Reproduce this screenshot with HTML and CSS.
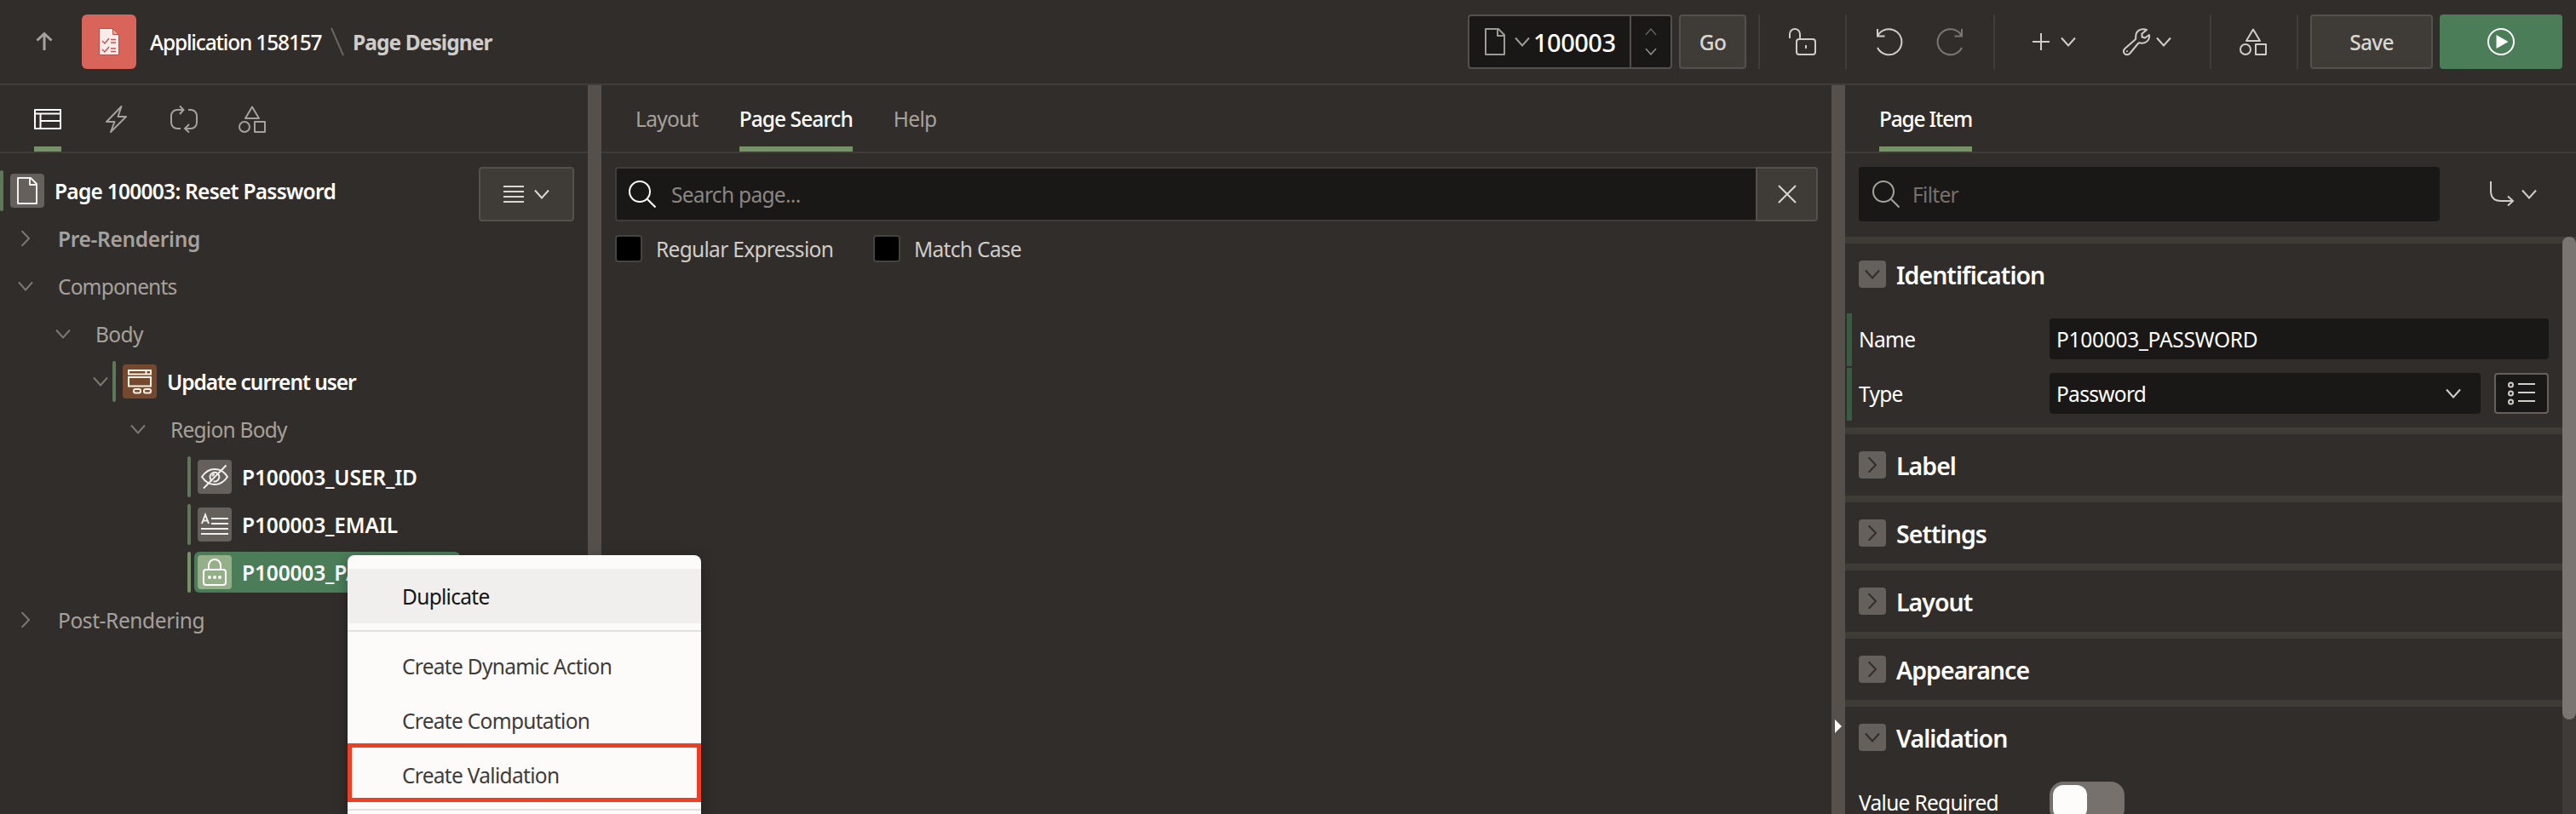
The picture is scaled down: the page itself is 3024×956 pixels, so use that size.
FILE: index.html
```html
<!DOCTYPE html>
<html lang="en">
<head>
<meta charset="utf-8">
<title>Page Designer</title>
<link rel="stylesheet" href="styles.css">
</head>
<body>
<svg class="defs" width="0" height="0" aria-hidden="true">
  <symbol id="chev-down" viewBox="0 0 18 12"><path d="M1 1.500 9 10.500 17 1.500"/></symbol>
  <symbol id="chev-right" viewBox="0 0 12 18"><path d="M1.500 0 10 9 1.500 18"/></symbol>
  <symbol id="page" viewBox="0 0 32 32"><path stroke-linejoin="round" d="M5 1H20L27 8V31H5ZM19 1V9H27"/></symbol>
  <symbol id="shapes" viewBox="0 0 32 32"><path stroke-linejoin="round" d="M16 1.500 24 15H8ZM19 19H31V31H19Z"/><circle cx="7" cy="25" r="6"/></symbol>
  <symbol id="search" viewBox="0 0 32 32"><circle cx="13" cy="13" r="12"/><path d="M22 22 31.500 31.500"/></symbol>
</svg>
<header class="topbar">
  <svg class="icon up" viewBox="0 0 20 22"><path d="M10 21V2M1.500 9.500 10 1.500 18.500 9.500"/></svg>
  <div class="app-icon">
    <svg viewBox="0 0 24 32"><path class="paper" d="M.5.500H16.500L23.500 7.500V31.500H.5Z"/><path class="fold" d="M16.500.500V7.500H23.500Z"/><path class="tick" d="M4 15 7 18 12 12M14 13.500H20M14 17H20M4 25 7 28 12 22M14 24H20M14 27.500H20"/></svg>
  </div>
  <span class="crumb t-crumb">Application 158157</span>
  <svg class="slash" viewBox="0 0 16 32"><path d="M1 0 15 32"/></svg>
  <span class="crumb current">Page Designer</span>
  <div class="tools">
    <div class="page-select">
      <svg class="icon i32" ><use href="#page"/></svg>
      <svg class="icon cd"><use href="#chev-down"/></svg>
      <span class="page-no">100003</span>
      <div class="spin"><svg class="icon sm flip dim"><use href="#chev-down"/></svg><svg class="icon sm"><use href="#chev-down"/></svg></div>
    </div>
    <button class="btn go">Go</button>
    <div class="tool t-lock"><svg class="icon i32" viewBox="0 0 32 32"><path d="M1 12V7A6 6 0 0 1 13 7V13"/><rect x="9" y="13" width="22" height="18" rx="3"/><path d="M20 20V24"/></svg></div>
    <div class="tool t-undo">
      <svg class="icon i32" viewBox="0 0 32 32"><path d="M2 1V9.500H10.500M2 9.500A15 15 0 1 1 2 23"/></svg>
      <svg class="icon i32 muted" viewBox="0 0 32 32"><path d="M30 1V9.500H21.500M30 9.500A15 15 0 1 0 30 23"/></svg>
    </div>
    <div class="tool t-add">
      <svg class="icon plus" viewBox="0 0 20 20"><path d="M10 0V20M0 10H20"/></svg><svg class="icon cd"><use href="#chev-down"/></svg>
      <svg class="icon i32 wrench" viewBox="0 0 32 32"><path stroke-linejoin="round" d="M2.500 24 14.500 13.500Q15.500 12.500 15.200 10C15 3.500 21 -.5 28 2L22.500 6.500 22.500 10.500 26 11.500 31 8C32 14 27 18.500 21 17.500Q19 17 18 18L8.500 29.500C6.500 32 3.500 31.500 2 30C.5 28 .5 26 2.500 24ZM5 26.500V28"/></svg><svg class="icon cd"><use href="#chev-down"/></svg>
    </div>
    <div class="tool t-shapes"><svg class="icon i32"><use href="#shapes"/></svg></div>
    <div class="tool t-save"><button class="btn save">Save</button>
    <button class="btn run"><svg class="i32" viewBox="0 0 32 32"><circle cx="16" cy="16" r="15" fill="none" stroke="#fff" stroke-width="2"/><path d="M10.500 8 24.500 16 10.500 24Z" fill="#fff"/></svg></button></div>
  </div>
</header>
<main class="workspace">
  <section class="left">
    <div class="strip icons">
      <div class="tab on"><svg class="icon i32 white" viewBox="0 0 32 32"><path stroke-linejoin="round" d="M1 5H31V27H1ZM1 9.500H31M7.500 9.500V27M7.500 18H31"/></svg></div>
      <div class="tab"><svg class="icon i32" viewBox="0 0 32 32"><path stroke-linejoin="round" d="M22.500 1 5 19H14.500L10 31 28 13H18.500Z"/></svg></div>
      <div class="tab"><svg class="icon i32" viewBox="0 0 32 32"><path d="M15 5H8A7 7 0 0 0 1 12V20A7 7 0 0 0 8 27H12M11 .500 15.500 5 11 10M21 5H24A7 7 0 0 1 31 12V20A7 7 0 0 1 24 27H17M22 22 17 27 22 31.500"/></svg></div>
      <div class="tab"><svg class="icon i32"><use href="#shapes"/></svg></div>
    </div>
    <div class="tree-area">
      <ul class="tree">
        <li class="lv-root"><i class="bar"></i><span class="box"><svg class="icon i32 light"><use href="#page"/></svg></span><b class="t-page">Page 100003: Reset Password</b></li>
        <li class="lv0"><span class="tw"><svg class="icon cr"><use href="#chev-right"/></svg></span><b class="t-pre">Pre-Rendering</b></li>
        <li class="lv0"><span class="tw"><svg class="icon cd"><use href="#chev-down"/></svg></span><span class="t-comp">Components</span></li>
        <li class="lv1"><span class="tw"><svg class="icon cd"><use href="#chev-down"/></svg></span><span class="t-body">Body</span></li>
        <li class="lv2"><span class="tw"><svg class="icon cd"><use href="#chev-down"/></svg></span><i class="bar"></i><span class="box form"><svg class="i32" viewBox="0 0 32 32" fill="none" stroke="#fff3e4" stroke-width="2"><path d="M3 3H29V7.500H3ZM23.500 3V7.500M3 11H29V21.500H3Z"/><rect x="9" y="25" width="8" height="4.500" rx="2"/><rect x="21" y="25" width="8" height="4.500" rx="2"/></svg></span><b class="t-upd">Update current user</b></li>
        <li class="lv3"><span class="tw"><svg class="icon cd"><use href="#chev-down"/></svg></span><span class="t-reg">Region Body</span></li>
        <li class="lv4"><i class="bar"></i><span class="node"><span class="box"><svg class="icon i32 light" viewBox="0 0 32 32"><path d="M1 16C9 4 23 4 31 16C23 28 9 28 1 16ZM3 29.500 29.500 2.500"/><path d="M13 20.800A5.500 5.500 0 1 1 20.500 13M18.500 12 21 14A5.500 5.500 0 0 1 14.500 21.300M13.500 15.500A2.500 2.500 0 0 1 16 13"/></svg></span><b class="t-uid">P100003_USER_ID</b></span></li>
        <li class="lv4"><i class="bar"></i><span class="node"><span class="box"><svg class="icon i32 light" viewBox="0 0 32 32"><path d="M1 15 5 4.500 9 15M2.500 11.500H7.500M12 9H32M12 15H32M0 21H32M0 27H32"/></svg></span><b class="t-email">P100003_EMAIL</b></span></li>
        <li class="lv4"><i class="bar"></i><span class="node sel"><span class="box"><svg class="icon i32 light" viewBox="0 0 32 32"><path d="M9 13V8A7 7 0 0 1 23 8V13"/><rect x="3" y="13" width="26" height="18" rx="3"/><g fill="#fff" stroke="none"><circle cx="10" cy="22" r="2"/><circle cx="16" cy="22" r="2"/><circle cx="22" cy="22" r="2"/></g></svg></span><b class="t-pw">P100003_PASSWORD</b></span></li>
        <li class="lv0"><span class="tw"><svg class="icon cr"><use href="#chev-right"/></svg></span><span class="t-post">Post-Rendering</span></li>
      </ul>
      <button class="btn tree-menu"><svg class="icon" width="24" height="22" viewBox="0 0 24 22"><path d="M0 2H24M0 8H24M0 14H24M0 20H24"/></svg><svg class="icon cd"><use href="#chev-down"/></svg></button>
    </div>
  </section>
  <div class="split"></div>
  <section class="center">
    <div class="strip words"><div class="tab t-layout">Layout</div><div class="tab on t-search">Page Search</div><div class="tab t-help">Help</div></div>
    <div class="search-row">
      <div class="search"><svg class="icon i32 white"><use href="#search"/></svg><span class="t-ph">Search page...</span></div>
      <button class="btn clear"><svg class="icon" width="20" height="20" viewBox="0 0 20 20"><path d="M0 0 20 20M20 0 0 20"/></svg></button>
    </div>
    <div class="checks"><i class="check"></i><span class="t-regex">Regular Expression</span><i class="check"></i><span class="t-case">Match Case</span></div>
  </section>
  <div class="split right-split"><svg width="8" height="16" viewBox="0 0 8 16"><path d="M0 0 8 8 0 16Z" fill="#fbf9f8"/></svg></div>
  <section class="right">
    <div class="strip words"><div class="tab on t-item">Page Item</div></div>
    <div class="filter-row">
      <div class="filter"><svg class="icon i32"><use href="#search"/></svg><span class="t-filter">Filter</span></div>
      <div class="goto"><svg class="icon" width="30" height="30" viewBox="0 0 30 30"><path d="M2 0V11Q2 23 14 23H28M22 17.500 28 23 22 28.500"/></svg><svg class="icon cd"><use href="#chev-down"/></svg></div>
    </div>
    <div class="props">
      <div class="groups">
        <div class="group"><h2><i class="tog"><svg class="cd"><use href="#chev-down"/></svg></i><span class="g-id">Identification</span></h2>
          <div class="prop changed"><label class="t-name">Name</label><div class="field t-val"><span>P100003_PASSWORD</span></div></div>
          <div class="prop changed"><label class="t-type">Type</label><div class="field select"><span class="t-pass">Password</span><svg class="icon cd"><use href="#chev-down"/></svg></div><button class="pick"><svg class="icon i32" viewBox="0 0 32 32"><circle cx="3.500" cy="6" r="2.500"/><circle cx="3.500" cy="16" r="2.500"/><circle cx="3.500" cy="26" r="2.500"/><path d="M12 5H32M12 15H32M12 25H32"/></svg></button></div>
        </div>
        <div class="group"><h2><i class="tog"><svg class="cr"><use href="#chev-right"/></svg></i><span class="g-label">Label</span></h2></div>
        <div class="group"><h2><i class="tog"><svg class="cr"><use href="#chev-right"/></svg></i><span class="g-set">Settings</span></h2></div>
        <div class="group"><h2><i class="tog"><svg class="cr"><use href="#chev-right"/></svg></i><span class="g-lay">Layout</span></h2></div>
        <div class="group"><h2><i class="tog"><svg class="cr"><use href="#chev-right"/></svg></i><span class="g-app">Appearance</span></h2></div>
        <div class="group"><h2><i class="tog"><svg class="cd"><use href="#chev-down"/></svg></i><span class="g-val">Validation</span></h2>
          <div class="prop req"><label class="t-req">Value Required</label><div class="switch"><i></i></div></div>
        </div>
      </div>
      <div class="scroll"><i></i></div>
    </div>
  </section>
</main>
<nav class="menu">
  <div class="item hover"><span class="m-dup">Duplicate</span></div>
  <hr>
  <div class="item"><span class="m-dyn">Create Dynamic Action</span></div>
  <div class="item"><span class="m-comp">Create Computation</span></div>
  <div class="item marked"><span class="m-val">Create Validation</span></div>
  <hr>
</nav>
</body>
</html>
```
FILE: styles.css
```css
* { box-sizing: border-box; }
body { margin: 0; width: 3024px; height: 956px; overflow: hidden; position: relative; display: flex; flex-direction: column; background: #312d2a; color: #fff; font: 24.5px/32px "Noto Sans", "Open Sans", sans-serif; letter-spacing: -.7px; }
.defs { position: absolute; }
svg { display: block; flex: none; overflow: visible; }
span, b, label { white-space: nowrap; padding-top: 2px; }
b { font-weight: 600; }
i { flex: none; }
.icon { fill: none; stroke: #a5a19c; stroke-width: 2; }
.i32 { width: 32px; height: 32px; }
.cd { width: 18px; height: 12px; }
.cr { width: 12px; height: 18px; }
.white { stroke: #fff; }
.light { stroke: #f1efed; }
button { font: inherit; color: inherit; letter-spacing: inherit; padding: 0; margin: 0; }
.btn { display: flex; align-items: center; justify-content: center; height: 64px; background: #3f3b37; border: 2px solid #55504b; border-radius: 4px; color: #d9d6d3; font-weight: 500; flex: none; }

.topbar { flex: none; height: 100px; border-bottom: 2px solid #413c38; display: flex; align-items: center; padding: 0 16px 0 42px; }
.up { width: 20px; height: 22px; margin-right: 34px; stroke-width: 3; }
.app-icon { width: 64px; height: 64px; border-radius: 6px; background: #d9645a; display: grid; place-items: center; margin-right: 16px; }
.app-icon svg { width: 24px; height: 32px; }
.paper { fill: #f9ecea; stroke: #b0524a; }
.fold { fill: #e6a39d; stroke: #b0524a; }
.tick { fill: none; stroke: #c4564d; stroke-width: 1.500; }
.crumb { width: 212px; letter-spacing: -1.17px; font-weight: 500; }
.slash { width: 16px; height: 32px; fill: none; stroke: #6b6661; stroke-width: 2; margin-right: 10px; }
.crumb.current { width: auto; color: #cfccc9; font-weight: 700; letter-spacing: -.93px; }
.tools { margin-left: auto; display: flex; align-items: center; height: 64px; }
.tools .icon { stroke: #d0cdc9; }
.page-select { width: 240px; height: 64px; background: #1a1816; border: 2px solid #55504b; border-radius: 4px; display: flex; align-items: center; margin-right: 8px; }
.page-select .icon { stroke: #9d9994; }
.page-select .i32 { margin-left: 14px; }
.page-select > .cd { margin: 0 4px 0 7px; }
.page-no { font-size: 29px; font-weight: 500; letter-spacing: -.5px; }
.spin { margin-left: auto; width: 48px; height: 100%; border-left: 2px solid #55504b; display: flex; flex-direction: column; align-items: center; justify-content: space-between; padding: 14px 0; }
.sm { width: 14px; height: 9px; }
.flip { transform: rotate(180deg); }
.page-select .dim { stroke: #6b6661; }
.go { width: 79px; }
.go, .save { padding-top: 2px; }
.tool { height: 64px; display: flex; align-items: center; border-left: 2px solid #413c38; }
.t-lock { margin-left: 14px; width: 102px; padding-left: 34px; }
.t-undo { width: 174px; padding-left: 34px; gap: 39px; }
.tools .muted { stroke: #7c7772; }
.t-add { width: 254px; padding-left: 44px; }
.plus { width: 20px; height: 20px; }
.t-add .cd { margin-left: 13px; }
.t-add .wrench { margin-left: 55px; }
.t-add .wrench + .cd { margin-left: 7px; }
.t-shapes { width: 102px; padding-left: 33px; }
.t-save { padding-left: 14px; gap: 8px; }
.save, .run { width: 144px; }
.run { background: #4a7d58; border-color: #4a7d58; }

.workspace { flex: 1; min-height: 0; display: grid; grid-template-columns: 690px 16px 1444px 16px 858px; }
.split { background: #55504b; }
.right-split { padding: 745px 0 0 4px; }
.strip { height: 80px; border-bottom: 2px solid #413c38; display: flex; }
.strip .tab { height: 78px; display: flex; align-items: center; justify-content: center; color: #a5a19c; border-bottom: 6px solid transparent; padding-top: 8px; }
.strip .tab.on { color: #fff; border-color: #759367; font-weight: 500; }
.icons { padding-left: 40px; gap: 48px; }
.icons .tab { width: 32px; }
.tree-area { display: flex; justify-content: space-between; padding: 16px 16px 0 0; }
.tree { list-style: none; margin: 0; padding: 0; }
.tree li { height: 56px; display: flex; align-items: center; color: #a5a19c; }
.tree b { color: #fff; }
.tree .t-pre { color: #a5a19c; letter-spacing: -.33px; }
.t-page { letter-spacing: -.74px; }
.t-comp { letter-spacing: -.85px; }
.t-body { letter-spacing: -.6px; }
.t-upd { letter-spacing: -1.05px; }
.t-reg { letter-spacing: -.75px; }
.t-uid, .t-email, .t-pw { letter-spacing: -.15px; }
.t-post { letter-spacing: -.4px; }
.tree .tw .icon { stroke: #7c7772; }
.bar { width: 4px; height: 48px; background: #60785a; border-radius: 2px; }
.box { width: 40px; height: 40px; padding: 0; border-radius: 4px; background: #65605b; display: grid; place-items: center; flex: none; margin-left: 8px; }
.form { background: #744930; }
.box + b { margin-left: 12px; }
.tw { width: 48px; padding: 0; display: grid; place-items: center; margin: 0 14px 0 6px; }
.lv1 { padding-left: 44px; }
.lv2 { padding-left: 88px; }
.lv2 .tw { margin-right: -10px; }
.lv3 { padding-left: 132px; }
.lv4 { padding-left: 220px; }
.node { display: flex; align-items: center; height: 48px; width: 312px; padding: 0; margin-left: 4px; border-radius: 6px; }
.node .box { margin-left: 4px; }
.sel { background: #4a7d58; }
.sel .box { background: #95b088; }
.sel .light { stroke: #fff; }
li:has(.sel) .bar { background: #759367; }
.tree-menu { width: 112px; gap: 12px; }
.tree-menu .icon { stroke: #d9d6d3; }

.words { padding-left: 40px; gap: 48px; }
.t-search { letter-spacing: -.93px; }
.t-item { letter-spacing: -1.2px; }
.search-row { display: flex; padding: 16px 16px 0; }
.search { flex: 1; height: 64px; background: #1a1816; border: 2px solid #403c39; border-right: 0; border-radius: 4px 0 0 4px; display: flex; align-items: center; padding-left: 14px; gap: 18px; color: #8a8681; }
.clear { width: 73px; border-radius: 0 4px 4px 0; }
.clear .icon { stroke: #d9d6d3; }
.checks { display: flex; align-items: center; padding: 15px 16px 0; color: #d0cdc9; }
.check { width: 32px; height: 32px; background: #000; border: 2px solid #47433f; border-radius: 4px; margin-right: 16px; }
.t-regex { width: 255px; }

.right { display: flex; flex-direction: column; min-height: 0; }
.filter-row { flex: none; height: 98px; padding: 16px 46px 0 16px; display: flex; justify-content: space-between; }
.filter { width: 682px; height: 64px; border-radius: 4px; background: #1a1816; display: flex; align-items: center; padding-left: 16px; gap: 15px; color: #76716c; }
.goto { height: 64px; display: flex; align-items: center; gap: 8px; }
.goto .icon { stroke: #d0cdc9; }
.props { flex: 1; min-height: 0; display: flex; overflow: hidden; }
.groups { width: 842px; }
.group { border-top: 8px solid #3f3b37; padding-bottom: 8px; }
.group h2 { margin: 0; height: 64px; padding: 8px 0 0 16px; display: flex; align-items: center; gap: 12px; font-size: 28.500px; font-weight: 600; letter-spacing: -.97px; }
.tog { width: 32px; height: 32px; border-radius: 4px; background: #65605b; display: grid; place-items: center; }
.tog svg { fill: none; stroke: #312d2a; stroke-width: 2; }
.prop { height: 64px; display: flex; align-items: center; padding-left: 16px; position: relative; }
.group h2 + .changed { margin-top: 16px; }
.changed::before { content: ""; position: absolute; left: 2px; top: 2px; width: 6px; height: 62px; background: #3b5a44; }
.prop label { width: 224px; }
.field { width: 586px; height: 48px; background: #1a1816; border-radius: 4px; padding: 0 10px 0 8px; display: flex; align-items: center; justify-content: space-between; }
.t-val { letter-spacing: -.27px; }
.select { width: 506px; padding-right: 23px; }
.pick { margin-left: 16px; width: 64px; height: 48px; border: 2px solid #65605b; border-radius: 4px; background: #1a1816; display: grid; place-items: center; }
.field .icon, .pick .icon { stroke: #d0cdc9; }
.req { margin-top: 16px; }
.switch { width: 88px; height: 48px; border-radius: 16px; background: #76716c; padding: 4px; }
.switch i { display: block; width: 40px; height: 40px; border-radius: 12px; background: #fdfcfb; }
.scroll { width: 16px; background: #3f3b38; }
.scroll i { display: block; height: 567px; border-radius: 8px; background: #7a7571; }

.menu { position: absolute; left: 408px; top: 652px; width: 415px; height: 320px; padding-top: 16px; background: #fcfbfa; border-radius: 8px; box-shadow: 0 4px 16px rgba(0,0,0,.3); color: #3f3b38; }
.item { height: 64px; display: flex; align-items: center; padding-left: 64px; }
.hover { background: #f0efed; color: #161513; }
.menu hr { margin: 8px 0; border: 0; height: 2px; background: #e3e1df; }
.marked { outline: 5px solid #eb4025; outline-offset: -5px; height: 69px; margin-top: -5px; padding-top: 5px; }
```
